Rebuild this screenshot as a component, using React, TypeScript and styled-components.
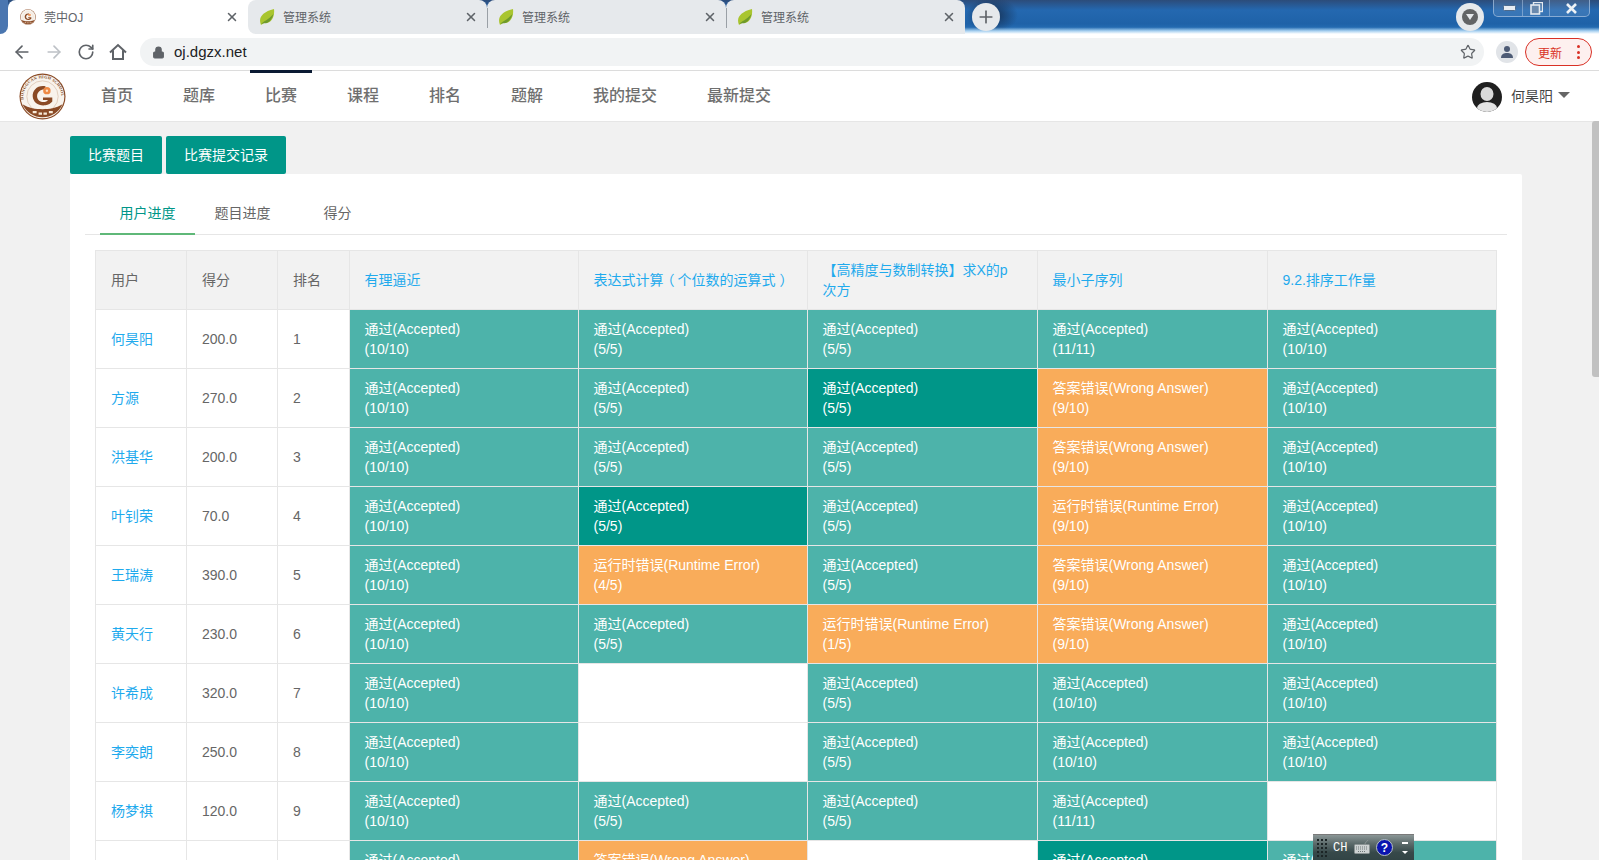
import React from "react";
import styled, { createGlobalStyle } from "styled-components";
import { ArrowLeft, ArrowRight, RotateCw, Lock, Star, Plus, X } from "lucide-react";

const Global = createGlobalStyle`
  html, body { margin: 0; padding: 0; height: 100%; overflow: hidden; }
  body { font-family: "Liberation Sans", "Noto Sans CJK SC", sans-serif; font-size: 14px; color: #666; background: #f1f1f1; }
  * { box-sizing: border-box; }
`;

const Screen = styled.div`
  position: relative;
  width: 1599px;
  height: 860px;
  overflow: hidden;
  background: #f1f1f1;
`;

const TabStrip = styled.div`
  display: flex;
  position: relative;
  height: 34px;
  background:
    linear-gradient(180deg, rgba(255,255,255,0) 80%, rgba(190,225,250,.85) 91%, #fff 100%),
    radial-gradient(ellipse 26px 18px at 992px 15px, rgba(20,40,70,.9), rgba(20,40,70,0) 100%),
    linear-gradient(180deg, #2c4c7a 0%, #2468b0 30%, #1f62a8 70%, #2c79bf 100%);
`;

const LeftEdge = styled.div`
  width: 8px;
  background: #fff;
  &::after {
    content: "";
    display: block;
    height: 100%;
    background: #4a76b0;
    border-bottom-right-radius: 8px;
  }
`;

const Tab = styled.div<{ $active?: boolean; $first?: boolean; $divider?: boolean; $w: number }>`
  position: relative;
  display: flex;
  align-items: center;
  gap: 8px;
  width: ${p => p.$w}px;
  height: 34px;
  padding: 0 9px 0 ${p => (p.$active ? 12 : 11)}px;
  background: ${p => (p.$active ? "#fff" : "#e6e9ec")};
  border-radius: 8px 8px 0 0;
  ${p => p.$first && "border-bottom-left-radius: 8px;"}
  ${p => p.$active && "margin-right: -8px; padding-right: 17px; box-shadow: 8px 0 0 #fff;"}
  ${p => !p.$active && "z-index: 1;"}
  ${p => p.$divider && `
    &::before {
      content: "";
      position: absolute;
      left: 0;
      top: 8px;
      height: 20px;
      width: 1px;
      background: #9aa0a6;
    }
  `}
`;

const TabTitle = styled.span`
  flex: 1;
  padding-bottom: 2px;
  font-size: 12px;
  color: #5f6368;
  white-space: nowrap;
`;

const TabClose = styled(X)`
  width: 14px;
  height: 14px;
  color: #5f6368;
  stroke-width: 2.6;
`;

const NewTab = styled.div`
  display: flex;
  align-items: center;
  justify-content: center;
  width: 28px;
  height: 28px;
  margin: 3px 0 0 7px;
  border-radius: 50%;
  background: #e6e9ec;
  color: #5f6368;
`;

const StripFill = styled.div`
  flex: 1;
`;

const MediaButton = styled.div`
  display: flex;
  align-items: center;
  justify-content: center;
  width: 28px;
  height: 28px;
  margin-top: 3px;
  border-radius: 50%;
  background: #e6e9ec;
`;

const MediaDot = styled.div`
  display: flex;
  align-items: center;
  justify-content: center;
  width: 16px;
  height: 16px;
  border-radius: 50%;
  background: #626466;
`;

const WindowControls = styled.div`
  display: flex;
  width: 97px;
  height: 17px;
  margin: 0 9px 0 9px;
  border: 1px solid rgba(170,195,225,.7);
  border-top: 0;
  border-radius: 0 0 5px 5px;
  background: rgba(255,255,255,.1);
`;

const WindowButton = styled.div<{ $w: number; $shift: number }>`
  display: flex;
  align-items: center;
  justify-content: center;
  width: ${p => p.$w}px;
  padding-left: ${p => p.$shift}px;
  & + & { border-left: 1px solid rgba(170,195,225,.55); }
`;

const Toolbar = styled.div`
  display: flex;
  align-items: center;
  height: 37px;
  padding: 0 7px 0 0;
  background: #fff;
  border-bottom: 1px solid #dcdcdc;
`;

const NavIcons = styled.div`
  display: flex;
  align-items: center;
  width: 140px;
  padding-left: 12px;
  gap: 12px;
  color: #5f6368;
`;

const ReloadIcon = styled(RotateCw)`
  margin-left: 1px;
`;

const HomeIcon = styled.svg`
  margin-left: 1px;
`;

const AddressBar = styled.div`
  display: flex;
  align-items: center;
  flex: 1;
  height: 28px;
  padding: 0 8px 0 12px;
  border-radius: 14px;
  background: #f1f3f4;
`;

const Url = styled.span`
  margin-left: 9px;
  padding-bottom: 1px;
  flex: 1;
  font-size: 15px;
  color: #202124;
`;

const ProfileButton = styled.div`
  display: flex;
  align-items: center;
  justify-content: center;
  width: 22px;
  height: 22px;
  margin: 0 7px 0 12px;
  border-radius: 50%;
  background: #e1e4e8;
`;

const UpdateButton = styled.div`
  display: flex;
  align-items: center;
  justify-content: space-between;
  width: 67px;
  height: 28px;
  padding: 0 11px 0 12px;
  border: 1px solid #d93025;
  border-radius: 14px;
  background: #fdf0ef;
  color: #d93025;
  font-size: 12px;
`;

const UpdateDots = styled.div`
  display: flex;
  flex-direction: column;
  gap: 2.5px;
`;

const UpdateDot = styled.i`
  display: block;
  width: 3px;
  height: 3px;
  border-radius: 50%;
  background: #d93025;
`;

const SiteHeader = styled.header`
  display: flex;
  align-items: center;
  height: 51px;
  padding: 0 29px 0 19px;
  background: #fff;
  border-bottom: 1px solid #e6e6e6;
`;

const LogoBox = styled.div`
  display: flex;
  width: 47px;
  margin-right: 20px;
`;

const SiteNav = styled.nav`
  display: flex;
  gap: 20px;
  flex: 1;
  height: 100%;
`;

const SiteNavItem = styled.a<{ $active?: boolean }>`
  display: flex;
  align-items: center;
  padding: 0 15px 6px;
  margin-top: -1px;
  font-size: 16px;
  color: #6f6f6f;
  font-weight: 500;
  border-top: 3px solid ${p => (p.$active ? "#0b1a33" : "transparent")};
`;

const UserBox = styled.div`
  display: flex;
  align-items: center;
  gap: 9px;
  padding-top: 2px;
  color: #444;
`;

const UserName = styled.span`
  padding-bottom: 5px;
`;

const Caret = styled.i`
  width: 0;
  height: 0;
  margin: 0 0 5px -4px;
  border-left: 6px solid transparent;
  border-right: 6px solid transparent;
  border-top: 6px solid #666;
`;

const Main = styled.main`
  padding: 14px 77px 0 70px;
`;

const ButtonRow = styled.div`
  display: flex;
  gap: 4px;
`;

const ActionButton = styled.a`
  display: flex;
  align-items: center;
  height: 38px;
  padding: 0 18px 3px;
  border-radius: 2px;
  background: #009688;
  color: #fff;
  font-size: 14px;
`;

const Panel = styled.section`
  padding: 15px 15px 0;
  background: #fff;
  border-radius: 2px;
`;

const TabBar = styled.div`
  display: flex;
  height: 46px;
  padding-left: 15px;
  border-bottom: 1px solid #e6e6e6;
`;

const TabItem = styled.div<{ $active?: boolean }>`
  position: relative;
  display: flex;
  align-items: center;
  justify-content: center;
  width: 95px;
  height: 46px;
  padding-bottom: 1px;
  font-size: 14px;
  color: ${p => (p.$active ? "#009688" : "#666")};
  ${p => p.$active && `
    &::after {
      content: "";
      position: absolute;
      left: 0;
      right: 0;
      bottom: 0;
      height: 2px;
      background: #5fb878;
    }
  `}
`;

const Table = styled.table`
  width: 1401px;
  margin: 15px 0 0 10px;
  table-layout: fixed;
  border-collapse: collapse;
  font-size: 14px;
  line-height: 20px;
  color: #666;
`;

const HeadCell = styled.th`
  padding: 9px 15px;
  border: 1px solid #e6e6e6;
  background: #f2f2f2;
  font-weight: 400;
  text-align: left;
  color: #666;
`;

const ProblemHead = styled(HeadCell)`
  padding-left: 14.5px;
`;

const LinkText = styled.a`
  color: #1faaed;
`;

const Punct = styled.span<{ $shift: number }>`
  display: inline-block;
  transform: translateX(${p => p.$shift}px);
`;

const BodyCell = styled.td`
  padding: 9px 15px;
  border: 1px solid #e6e6e6;
  background: #fff;
`;

const colors = { a: "#4db3aa", d: "#009688", w: "#f9ac5a", r: "#f9ac5a" };
const labels = {
  a: "通过(Accepted)",
  d: "通过(Accepted)",
  w: "答案错误(Wrong Answer)",
  r: "运行时错误(Runtime Error)",
};
type Kind = keyof typeof colors;

const ResultTd = styled.td<{ $kind: Kind }>`
  padding: 9px 15px 9px 14.5px;
  border: 1px solid #e6e6e6;
  background: ${p => colors[p.$kind]};
  color: #fff;
`;

const ImeBar = styled.div`
  position: absolute;
  left: 1313px;
  top: 834px;
  width: 101px;
  height: 26px;
  display: flex;
  align-items: center;
  padding: 0 5px 0 4px;
  border-top: 1px solid #7a7a7a;
  background: linear-gradient(180deg, #8b9696 0%, #5b6a6a 35%, #37494a 70%, #324445 100%);
`;

const ImeText = styled.span`
  margin: 0 7px 0 6px;
  font-family: "Liberation Mono", monospace;
  font-size: 12px;
  color: #fff;
`;

const ImeHelp = styled.svg`
  margin-left: 6px;
`;

const ImeArrows = styled.svg`
  margin-left: 9px;
`;

const ScrollThumb = styled.div`
  position: absolute;
  right: 0;
  top: 121px;
  width: 7px;
  height: 256px;
  background: #c1c1c1;
  border-radius: 3px 0 0 3px;
`;

const Logo = ({ size, id }: { size: number; id: string }) => (
  <svg width={size} height={size} viewBox="0 0 48 48">
    <defs>
      <path id={id} d="M5.5 31 A19.5 19.5 0 1 1 42.5 31" />
    </defs>
    <circle cx="24" cy="24" r="23.5" fill="#8a4a25" />
    <circle cx="24" cy="24" r="22.3" fill="#f8f3ec" />
    {size > 20 && (
      <text fontSize="4.2" fill="#7a4320" fontFamily="Liberation Serif, serif" fontWeight="700" letterSpacing=".3">
        <textPath href={`#${id}`} startOffset="4">DONGGUAN HIGH SCHOOL</textPath>
      </text>
    )}
    <circle cx="24" cy="24" r="16" fill="none" stroke="#c9a98d" strokeWidth=".5" />
    <path d="M3.6 32 A22.3 22.3 0 0 0 44.4 32 C38 36 31 37 24 37 C17 37 10 36 3.6 32Z" fill="#8a4a25" />
    <path d="M27 13.5 C19 12 13.5 17.5 14 24 C14.5 30 20 34 27 33 C30 32.5 32.5 31 34 29 L34 25 L24.5 25 L24.5 27.5 L29.5 27.5 C28 30.5 22 30.5 19.5 27 C17 23 19 16.5 27 16.5Z" fill="#8a4a25" />
    <circle cx="28.5" cy="18" r="3.8" fill="#ee8a45" />
    <circle cx="28.5" cy="18" r="1.2" fill="#fde3c8" />
    <path d="M14 40h4M20 41.5h3.5M25 41.5h3.5M30.5 40h4" stroke="#f7e9d6" strokeWidth="2.2" />
  </svg>
);

const Leaf = () => (
  <svg width="16" height="16" viewBox="0 0 16 16">
    <path d="M2 16 C-1 9 3 3 15 0 C16 8 12 15 5 14 C4 14.5 3 15.2 2 16Z" fill="#a9c52f" />
    <path d="M2 15 C5 12 9 11 14.5 5 C13 11 9 15 5 14.2Z" fill="#6f9a2c" />
  </svg>
);

const Rows: { name: string; score: string; rank: string; cells: ([Kind, string] | null)[] }[] = [
  { name: "何昊阳", score: "200.0", rank: "1", cells: [["a", "10/10"], ["a", "5/5"], ["a", "5/5"], ["a", "11/11"], ["a", "10/10"]] },
  { name: "方源", score: "270.0", rank: "2", cells: [["a", "10/10"], ["a", "5/5"], ["d", "5/5"], ["w", "9/10"], ["a", "10/10"]] },
  { name: "洪基华", score: "200.0", rank: "3", cells: [["a", "10/10"], ["a", "5/5"], ["a", "5/5"], ["w", "9/10"], ["a", "10/10"]] },
  { name: "叶钊荣", score: "70.0", rank: "4", cells: [["a", "10/10"], ["d", "5/5"], ["a", "5/5"], ["r", "9/10"], ["a", "10/10"]] },
  { name: "王瑞涛", score: "390.0", rank: "5", cells: [["a", "10/10"], ["r", "4/5"], ["a", "5/5"], ["w", "9/10"], ["a", "10/10"]] },
  { name: "黄天行", score: "230.0", rank: "6", cells: [["a", "10/10"], ["a", "5/5"], ["r", "1/5"], ["w", "9/10"], ["a", "10/10"]] },
  { name: "许希成", score: "320.0", rank: "7", cells: [["a", "10/10"], null, ["a", "5/5"], ["a", "10/10"], ["a", "10/10"]] },
  { name: "李奕朗", score: "250.0", rank: "8", cells: [["a", "10/10"], null, ["a", "5/5"], ["a", "10/10"], ["a", "10/10"]] },
  { name: "杨梦祺", score: "120.0", rank: "9", cells: [["a", "10/10"], ["a", "5/5"], ["a", "5/5"], ["a", "11/11"], null] },
  { name: "", score: "", rank: "", cells: [["a", "10/10"], ["w", "9/10"], null, ["d", "10/10"], ["a", "10/10"]] },
];

const problems: React.ReactNode[] = [
  "有理逼近",
  <>表达式计算<Punct $shift={-3}>（</Punct>个位数的运算式<Punct $shift={4}>）</Punct></>,
  <>【高精度与数制转换】求X的p<br />次方</>,
  "最小子序列",
  "9.2.排序工作量",
];
const colWidths = [91, 91, 72, 229, 229, 230, 230, 229];

export default function App() {
  return (
    <Screen>
      <Global />
      <TabStrip>
        <LeftEdge />
        <Tab $active $w={248}>
          <Logo size={16} id="logoArcTab" />
          <TabTitle>莞中OJ</TabTitle>
          <TabClose />
        </Tab>
        <Tab $first $w={239}>
          <Leaf />
          <TabTitle>管理系统</TabTitle>
          <TabClose />
        </Tab>
        <Tab $divider $w={239}>
          <Leaf />
          <TabTitle>管理系统</TabTitle>
          <TabClose />
        </Tab>
        <Tab $divider $w={239}>
          <Leaf />
          <TabTitle>管理系统</TabTitle>
          <TabClose />
        </Tab>
        <NewTab><Plus size={20} strokeWidth={2} /></NewTab>
        <StripFill />
        <MediaButton>
          <MediaDot>
            <svg width="8" height="6" viewBox="0 0 8 6"><path d="M0 0h8L4 6z" fill="#e6e9ec" /></svg>
          </MediaDot>
        </MediaButton>
        <WindowControls>
          <WindowButton $w={29} $shift={2}>
            <svg width="13" height="6" viewBox="0 0 13 6"><rect x=".5" y=".5" width="12" height="5" rx="1" fill="#e8edf3" stroke="#4d6a8c" /></svg>
          </WindowButton>
          <WindowButton $w={27} $shift={0}>
            <svg width="13" height="13" viewBox="0 0 13 13"><rect x="3.5" y=".5" width="9" height="9" fill="none" stroke="#e4e9ef" strokeWidth="1.4" /><rect x="1" y="3" width="8.5" height="9" fill="#6a89ad" stroke="#e4e9ef" strokeWidth="1.6" /></svg>
          </WindowButton>
          <WindowButton $w={41} $shift={5}>
            <svg width="13" height="11" viewBox="0 0 13 11"><path d="M2 1l9 9M11 1l-9 9" stroke="#eef2f6" strokeWidth="2.6" /></svg>
          </WindowButton>
        </WindowControls>
      </TabStrip>

      <Toolbar>
        <NavIcons>
          <ArrowLeft size={20} strokeWidth={2} />
          <ArrowRight size={20} strokeWidth={2} color="#bdc1c6" />
          <ReloadIcon size={18} strokeWidth={2.2} />
          <HomeIcon width="20" height="20" viewBox="0 0 20 20" fill="none" stroke="currentColor" strokeWidth="2" strokeLinejoin="miter">
            <path d="M2 10.5 L10 3 L18 10.5 M5 8.5 V17 H15 V8.5" />
          </HomeIcon>
        </NavIcons>
        <AddressBar>
          <Lock size={13} fill="#5f6368" color="#5f6368" />
          <Url>oj.dgzx.net</Url>
          <Star size={16} strokeWidth={1.8} color="#5f6368" />
        </AddressBar>
        <ProfileButton>
          <svg width="14" height="14" viewBox="0 0 14 14"><circle cx="7" cy="4" r="3" fill="#4d5b75" /><path d="M1 13c0-4 3-5 6-5s6 1 6 5z" fill="#4d5b75" /></svg>
        </ProfileButton>
        <UpdateButton>
          更新
          <UpdateDots><UpdateDot /><UpdateDot /><UpdateDot /></UpdateDots>
        </UpdateButton>
      </Toolbar>

      <SiteHeader>
        <LogoBox><Logo size={47} id="logoArcHead" /></LogoBox>
        <SiteNav>
          {["首页", "题库", "比赛", "课程", "排名", "题解", "我的提交", "最新提交"].map(t => (
            <SiteNavItem key={t} $active={t === "比赛"}>{t}</SiteNavItem>
          ))}
        </SiteNav>
        <UserBox>
          <svg width="30" height="30" viewBox="0 0 30 30">
            <defs><clipPath id="avatarClip"><circle cx="15" cy="15" r="15" /></clipPath></defs>
            <circle cx="15" cy="15" r="15" fill="#1f1f1f" />
            <g clipPath="url(#avatarClip)">
              <ellipse cx="15" cy="12" rx="6.5" ry="7" fill="#d9d9d9" />
              <ellipse cx="15" cy="26" rx="10" ry="6" fill="#e3e3e3" />
            </g>
          </svg>
          <UserName>何昊阳</UserName>
          <Caret />
        </UserBox>
      </SiteHeader>

      <Main>
        <ButtonRow>
          <ActionButton>比赛题目</ActionButton>
          <ActionButton>比赛提交记录</ActionButton>
        </ButtonRow>
        <Panel>
          <TabBar>
            <TabItem $active>用户进度</TabItem>
            <TabItem>题目进度</TabItem>
            <TabItem>得分</TabItem>
          </TabBar>
          <Table>
            <colgroup>
              {colWidths.map((w, i) => <col key={i} width={w} />)}
            </colgroup>
            <thead>
              <tr>
                <HeadCell>用户</HeadCell>
                <HeadCell>得分</HeadCell>
                <HeadCell>排名</HeadCell>
                {problems.map((p, i) => <ProblemHead key={i}><LinkText>{p}</LinkText></ProblemHead>)}
              </tr>
            </thead>
            <tbody>
              {Rows.map((r, i) => (
                <tr key={i}>
                  <BodyCell><LinkText>{r.name}</LinkText></BodyCell>
                  <BodyCell>{r.score}</BodyCell>
                  <BodyCell>{r.rank}</BodyCell>
                  {r.cells.map((c, j) =>
                    c ? (
                      <ResultTd key={j} $kind={c[0]}>
                        {labels[c[0]]}
                        <br />({c[1]})
                      </ResultTd>
                    ) : (
                      <BodyCell key={j} />
                    )
                  )}
                </tr>
              ))}
            </tbody>
          </Table>
        </Panel>
      </Main>

      <ScrollThumb />
      <ImeBar>
        <svg width="10" height="18" viewBox="0 0 10 18">
          {[1, 5, 9, 13, 17].map(y => (
            <g key={y} fill="#1c2526">
              <rect x="0" y={y - 1} width="2" height="2" /><rect x="4" y={y - 1} width="2" height="2" /><rect x="8" y={y - 1} width="2" height="2" />
            </g>
          ))}
        </svg>
        <ImeText>CH</ImeText>
        <svg width="16" height="15" viewBox="0 0 16 15">
          <path d="M11 4c0-2 2-2 3-4" fill="none" stroke="#8a9393" />
          <rect x=".5" y="4.5" width="15" height="9" rx="1" fill="#cdd2d2" stroke="#8a9393" />
          <path d="M2 7h12M2 9h12M4 11.5h8" stroke="#6f7878" strokeWidth="1" strokeDasharray="1 1" />
        </svg>
        <ImeHelp width="17" height="17" viewBox="0 0 17 17">
          <circle cx="8.5" cy="8.5" r="8" fill="#0a14b0" stroke="#b9c2c4" />
          <text x="8.5" y="13" textAnchor="middle" fontSize="12" fontWeight="700" fill="#fff" fontFamily="Liberation Sans, sans-serif">?</text>
        </ImeHelp>
        <ImeArrows width="6" height="16" viewBox="0 0 6 16">
          <rect x="0" y="2" width="6" height="2" fill="#fff" />
          <path d="M0 11h6l-3 3z" fill="#fff" />
        </ImeArrows>
      </ImeBar>
    </Screen>
  );
}
